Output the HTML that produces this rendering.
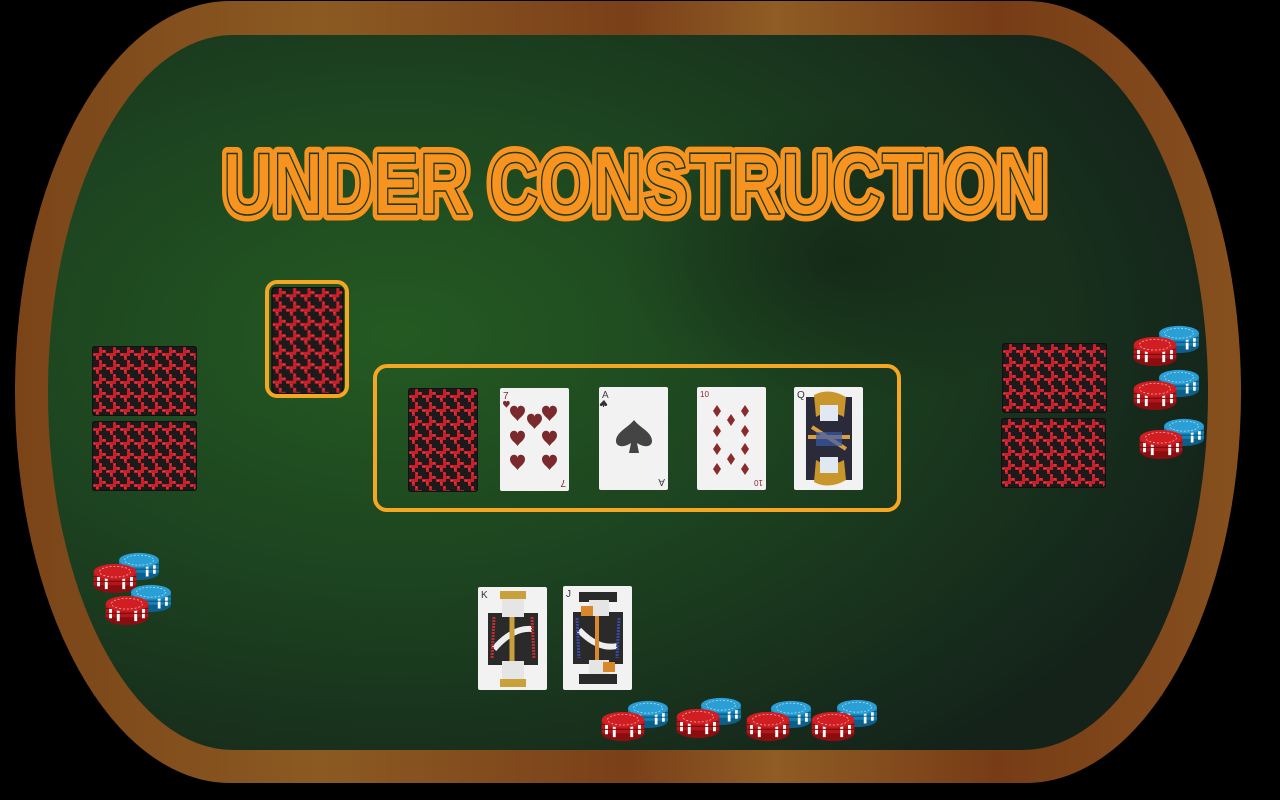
<!DOCTYPE html>
<html><head><meta charset="utf-8"><style>
html,body{margin:0;padding:0;background:#000;width:1280px;height:800px;overflow:hidden}
svg{display:block}
text{font-family:"Liberation Sans",sans-serif}
</style></head><body>
<svg width="1280" height="800" viewBox="0 0 1280 800" xmlns="http://www.w3.org/2000/svg">
<defs>
<linearGradient id="wood" x1="0" y1="0" x2="1" y2="0">
<stop offset="0" stop-color="#7a4418"/><stop offset="0.25" stop-color="#8b5a22"/><stop offset="0.5" stop-color="#7a4019"/><stop offset="0.62" stop-color="#8e5c24"/><stop offset="0.8" stop-color="#773c16"/><stop offset="1" stop-color="#86501e"/>
</linearGradient>
<radialGradient id="felt" cx="0.3" cy="0.42" r="0.75">
<stop offset="0" stop-color="#245a22"/><stop offset="0.45" stop-color="#1d4420"/><stop offset="1" stop-color="#14221a"/>
</radialGradient>
<radialGradient id="dark" cx="0.5" cy="0.5" r="0.5">
<stop offset="0" stop-color="#0f1a12" stop-opacity="0.55"/><stop offset="1" stop-color="#0f1a12" stop-opacity="0"/>
</radialGradient>
<pattern id="hound" width="14" height="14" patternUnits="userSpaceOnUse">
<rect width="14" height="14" fill="#1d1a1b"/>
<path d="M0 7h7V0h3v4h4v3H10v3H7v4H4V10H0z" fill="#c8202a"/>
<path d="M1 8.5h2M4 11h2M8 1.5h1M11 5h2" stroke="#ff5050" stroke-width="0.8"/>
</pattern>
<symbol id="back" viewBox="0 0 70 104">
<rect x="0.5" y="0.5" width="69" height="103" rx="3" fill="url(#hound)" stroke="#111" stroke-width="1.5"/>
</symbol>
<symbol id="backh" viewBox="0 0 105 70">
<rect x="0.5" y="0.5" width="104" height="69" rx="3" fill="url(#hound)" stroke="#111" stroke-width="1.5"/>
</symbol>
<symbol id="red" viewBox="0 0 46 32">
<ellipse cx="23" cy="23" rx="22" ry="8" fill="#8a0d10"/>
<rect x="1" y="9" width="44" height="14" fill="#b5161a"/>
<path d="M6 10v14M14 12v15M32 12v15M40 10v14" stroke="#fff" stroke-width="3"/>
<path d="M1 14h44M1 19h44" stroke="#7a0a0c" stroke-width="1"/>
<ellipse cx="23" cy="9" rx="22" ry="8" fill="#d01e22"/>
<ellipse cx="23" cy="9" rx="16" ry="5.5" fill="none" stroke="#f3b3b3" stroke-width="0.8" stroke-dasharray="2 2"/>
</symbol>
<symbol id="blue" viewBox="0 0 46 32">
<ellipse cx="23" cy="23" rx="22" ry="8" fill="#0c5f8a"/>
<rect x="1" y="9" width="44" height="14" fill="#1580b5"/>
<path d="M6 10v14M14 12v15M32 12v15M40 10v14" stroke="#fff" stroke-width="3"/>
<path d="M1 14h44M1 19h44" stroke="#0a4a6a" stroke-width="1"/>
<ellipse cx="23" cy="9" rx="22" ry="8" fill="#2a9fd6"/>
<ellipse cx="23" cy="9" rx="16" ry="5.5" fill="none" stroke="#bfe6f7" stroke-width="0.8" stroke-dasharray="2 2"/>
</symbol>
<path id="heart" d="M0 4.5C0-1.5 7.5-1.5 7.5 3C7.5-1.5 15-1.5 15 4.5C15 9 9 12 7.5 15C6 12 0 9 0 4.5z" fill="#7a2a2c"/>
<path id="diam" d="M4 0L8 6L4 12L0 6z" fill="#8a2a2a"/>
</defs>

<rect x="15" y="1" width="1226" height="782" rx="215" ry="391" fill="url(#wood)"/>
<rect x="48" y="35" width="1160" height="715" rx="185" ry="357" fill="url(#felt)"/>
<ellipse cx="840" cy="260" rx="220" ry="150" fill="url(#dark)"/>

<g font-weight="bold" font-size="88">
<text x="635" y="214" text-anchor="middle" textLength="824" lengthAdjust="spacingAndGlyphs" fill="#f7931e" stroke="#f7931e" stroke-width="13" stroke-linejoin="round">UNDER CONSTRUCTION</text>
<text x="635" y="214" text-anchor="middle" textLength="824" lengthAdjust="spacingAndGlyphs" fill="#f7931e" stroke="#1c3a1a" stroke-width="1.6">UNDER CONSTRUCTION</text>
</g>

<use href="#backh" x="92" y="346" width="105" height="70"/>
<use href="#backh" x="92" y="421" width="105" height="70"/>
<use href="#backh" x="1002" y="343" width="105" height="70"/>
<use href="#backh" x="1001" y="418" width="105" height="70"/>
<use href="#back" x="270" y="287" width="75" height="107"/>
<rect x="267" y="282" width="80" height="114" rx="10" fill="none" stroke="#f5a623" stroke-width="4"/>

<rect x="375" y="366" width="524" height="144" rx="12" fill="none" stroke="#f5a623" stroke-width="4"/>
<use href="#back" x="408" y="388" width="70" height="104"/>
<g transform="translate(500,388)">
<rect width="69" height="103" rx="2" fill="#f2f2f2"/>
<text x="3" y="11" font-size="10" fill="#7a2a2c">7</text>
<use href="#heart" transform="translate(3,13) scale(0.45)"/>
<use href="#heart" x="10" y="18"/><use href="#heart" x="42" y="18"/><use href="#heart" x="27" y="26"/>
<use href="#heart" x="10" y="43"/><use href="#heart" x="42" y="43"/>
<use href="#heart" x="10" y="67"/><use href="#heart" x="42" y="67"/>
<text x="-66" y="-92" font-size="10" fill="#7a2a2c" transform="rotate(180)">7</text>
</g>
<g transform="translate(599,387)">
<rect width="69" height="103" rx="2" fill="#f2f2f2"/>
<text x="3" y="11" font-size="10" fill="#444">A</text>
<path d="M5 13l3 4c1 2-2 3-3 1l0 2h-1l0-2c-1 2-4 1-3-1z" fill="#333"/>
<path d="M35 33C30 40 17 45 17 54C17 60 25 61 32 56L30 66H40L38 56C45 61 53 60 53 54C53 45 40 40 35 33z" fill="#444"/>
<text x="-66" y="-92" font-size="10" fill="#444" transform="rotate(180)">A</text>
</g>
<g transform="translate(697,387)">
<rect width="69" height="103" rx="2" fill="#f2f2f2"/>
<text x="3" y="10" font-size="8" fill="#8a2a2a">10</text>
<use href="#diam" x="16" y="18"/><use href="#diam" x="44" y="18"/><use href="#diam" x="30" y="27"/>
<use href="#diam" x="16" y="38"/><use href="#diam" x="44" y="38"/>
<use href="#diam" x="16" y="56"/><use href="#diam" x="44" y="56"/><use href="#diam" x="30" y="66"/>
<use href="#diam" x="16" y="76"/><use href="#diam" x="44" y="76"/>
<text x="-66" y="-93" font-size="8" fill="#8a2a2a" transform="rotate(180)">10</text>
</g>
<g transform="translate(794,387)">
<rect width="69" height="103" rx="2" fill="#f2f2f2"/>
<text x="3" y="11" font-size="10" fill="#333">Q</text>
<path d="M12 10h46v83H12z" fill="#2a2a3a"/>
<path d="M20 8Q35 0 52 10L50 30Q35 22 22 30z" fill="#c8962a"/>
<path d="M20 95Q35 103 52 93L50 73Q35 81 22 73z" fill="#c8962a"/>
<rect x="26" y="18" width="18" height="16" fill="#e0e8f2"/>
<rect x="26" y="70" width="18" height="16" fill="#e0e8f2"/>
<path d="M14 50L56 50M18 40L52 62" stroke="#d8a040" stroke-width="4"/>
<path d="M22 45h26v14H22z" fill="#3a5aa8" opacity="0.7"/>
</g>

<g transform="translate(478,587)">
<rect width="69" height="103" rx="2" fill="#f2f2f2"/>
<text x="3" y="11" font-size="10" fill="#333">K</text>
<path d="M10 26h50v52H10z" fill="#2a2a2a"/>
<path d="M22 4h26v8H22z" fill="#c9a13a"/>
<rect x="24" y="12" width="22" height="18" fill="#e5e5e5"/>
<rect x="24" y="74" width="22" height="18" fill="#e5e5e5"/>
<path d="M22 92h26v8H22z" fill="#c9a13a"/>
<path d="M16 62Q35 40 54 42" stroke="#eee" stroke-width="6" fill="none"/>
<path d="M16 30L14 72M54 30L56 72" stroke="#c03030" stroke-width="3" stroke-dasharray="2 1"/>
<path d="M34 30v44" stroke="#c9a13a" stroke-width="5"/>
</g>
<g transform="translate(563,586)">
<rect width="69" height="104" rx="2" fill="#f2f2f2"/>
<text x="3" y="11" font-size="10" fill="#333">J</text>
<path d="M10 26h50v52H10z" fill="#2a2a2a"/>
<path d="M16 6h38v10H16z" fill="#2a2a2a"/>
<rect x="26" y="14" width="20" height="16" fill="#e5e5e5"/>
<path d="M18 20h12v10H18z" fill="#d8882a"/>
<rect x="26" y="74" width="20" height="16" fill="#e5e5e5"/>
<path d="M40 76h12v10H40z" fill="#d8882a"/>
<path d="M16 88h38v10H16z" fill="#2a2a2a"/>
<path d="M16 44Q35 64 54 60" stroke="#eee" stroke-width="6" fill="none"/>
<path d="M14 32L16 72M56 32L54 72" stroke="#3a4aa8" stroke-width="3" stroke-dasharray="2 1"/>
<path d="M34 30v44" stroke="#d8882a" stroke-width="4"/>
</g>

<use href="#blue" x="627" y="700" width="42" height="29"/><use href="#red" x="600" y="711" width="46" height="31"/>
<use href="#blue" x="700" y="697" width="42" height="29"/><use href="#red" x="675" y="708" width="46" height="31"/>
<use href="#blue" x="770" y="700" width="42" height="29"/><use href="#red" x="745" y="711" width="46" height="31"/>
<use href="#blue" x="836" y="699" width="42" height="29"/><use href="#red" x="810" y="711" width="46" height="31"/>
<use href="#blue" x="118" y="552" width="42" height="29"/><use href="#red" x="92" y="563" width="46" height="31"/>
<use href="#blue" x="130" y="584" width="42" height="29"/><use href="#red" x="104" y="595" width="46" height="31"/>
<use href="#blue" x="1158" y="325" width="42" height="29"/><use href="#red" x="1132" y="336" width="46" height="31"/>
<use href="#blue" x="1158" y="369" width="42" height="29"/><use href="#red" x="1132" y="380" width="46" height="31"/>
<use href="#blue" x="1163" y="418" width="42" height="29"/><use href="#red" x="1138" y="429" width="46" height="31"/>
</svg>
</body></html>
